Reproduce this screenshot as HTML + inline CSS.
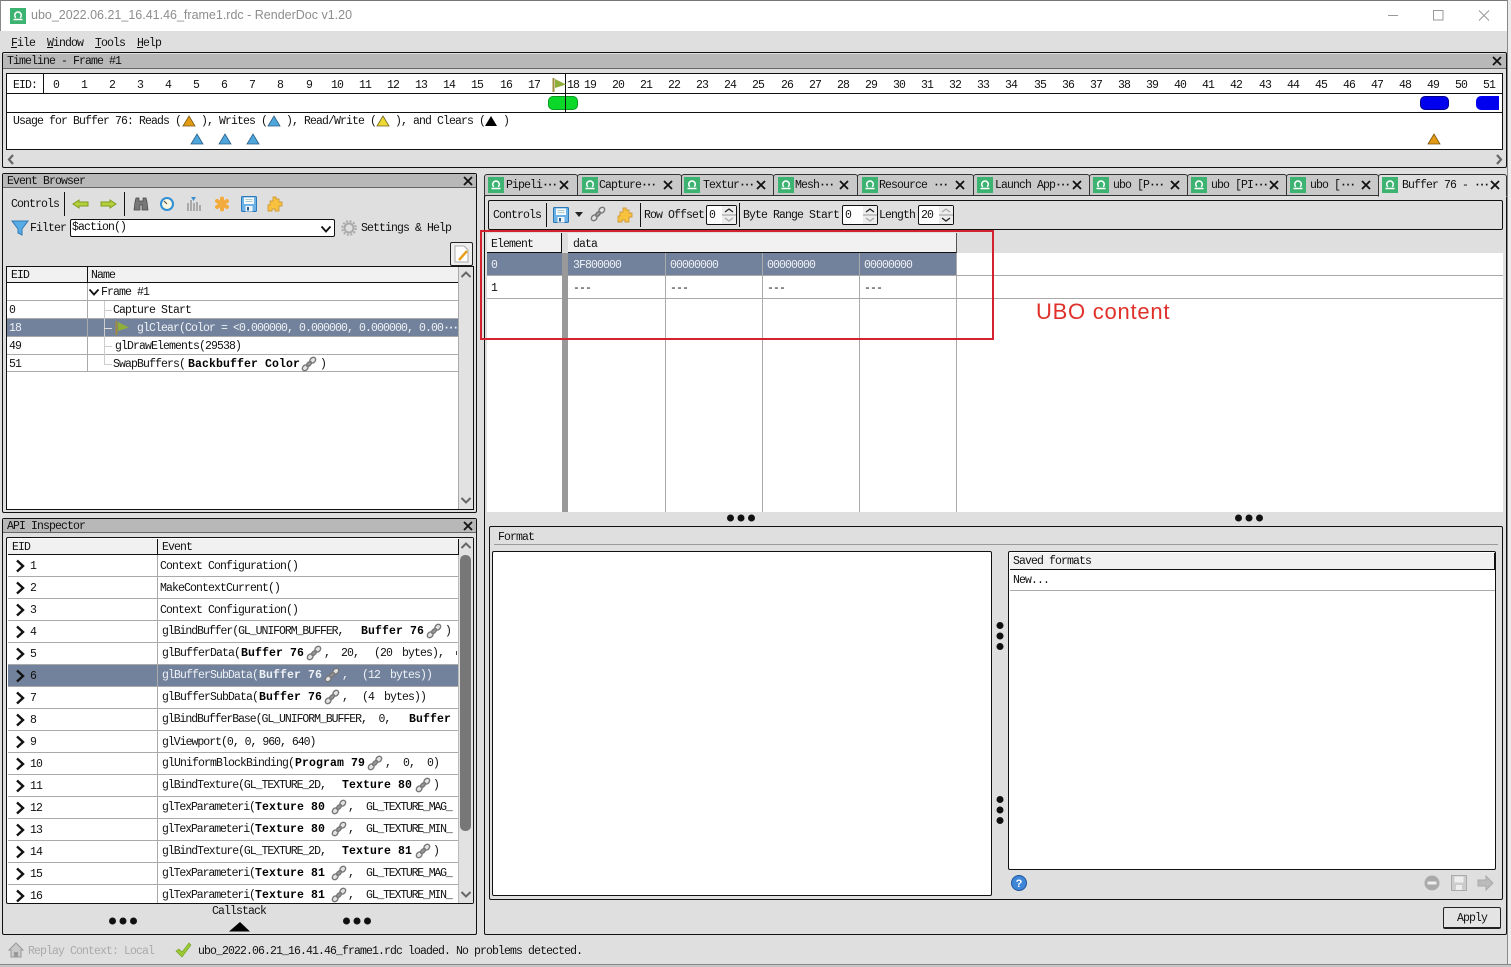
<!DOCTYPE html>
<html><head><meta charset="utf-8"><title>RenderDoc</title>
<style>
html,body{margin:0;padding:0;background:#dfdfdf;}
body{position:relative;width:1511px;height:967px;overflow:hidden;font-family:"Liberation Mono","Noto Sans CJK SC",monospace;font-size:11.5px;letter-spacing:-.9px;color:#111;}
div,span,svg{position:absolute;box-sizing:border-box;}
.t{white-space:pre;height:14px;line-height:14px;margin-top:1px;}
.b{font-weight:bold;letter-spacing:.1px;color:#000;}
.w{color:#eef1f5;}
.c{transform:translateX(-50%);}
.box{border:1px solid #111;}
.hd{background:#b8b8b8;}
.l{background:#aaa;}
.k{background:#111;}
.tab{top:174px;height:22px;background:#c9c9c9;border:1px solid #333;border-bottom:1px solid #333;border-radius:3px 3px 0 0;}
.e{letter-spacing:-2.3px;font-weight:bold;}
</style></head><body>
<svg width="0" height="0" style="left:0;top:0"><defs>
<symbol id="rd" viewBox="0 0 16 16"><rect width="16" height="16" fill="#3cb371"/><path d="M5.800 9.800a3.300 3.300 0 1 1 4.400 0" fill="none" stroke="#fff" stroke-width="1.500"/><path d="M3.500 11.500h9" stroke="#fff" stroke-width="1.500"/></symbol>
<symbol id="x" viewBox="0 0 10 10"><path d="M1 1l8 8M9 1l-8 8" stroke="#111" stroke-width="1.800"/></symbol>
<symbol id="ch" viewBox="0 0 16 16"><g fill="#e4e4e4" stroke="#777" stroke-width="1.400"><ellipse cx="11.800" cy="4.200" rx="3.200" ry="2.500" transform="rotate(-45 11.800 4.200)"/><ellipse cx="4.200" cy="11.800" rx="3.200" ry="2.500" transform="rotate(-45 4.200 11.800)"/><ellipse cx="8" cy="8" rx="3" ry="1.700" transform="rotate(-45 8 8)" fill="#999"/></g></symbol>
<symbol id="tb" viewBox="0 0 14 12"><path d="M7 1l6 10H1z" fill="#4ea6dc" stroke="#2b5f85" stroke-width=".8"/></symbol>
<symbol id="to" viewBox="0 0 14 12"><path d="M7 1l6 10H1z" fill="#e39b13" stroke="#7a5510" stroke-width=".8"/></symbol>
<symbol id="ty" viewBox="0 0 14 12"><path d="M7 1l6 10H1z" fill="#eed934" stroke="#6e6420" stroke-width=".8"/></symbol>
<symbol id="tk" viewBox="0 0 14 12"><path d="M7 1l6 10H1z" fill="#000"/></symbol>
<symbol id="ar" viewBox="0 0 10 14"><path d="M2 1.500L8 7l-6 5.500" fill="none" stroke="#111" stroke-width="2.400"/></symbol>
<symbol id="fl" viewBox="0 0 16 16"><rect x=".5" y=".5" width="15" height="15" rx="1" fill="#6db2e6" stroke="#2b78b8"/><rect x="3" y="1.500" width="10" height="6.500" fill="#f4f8fb"/><path d="M4.500 3.500h7M4.500 5.500h7" stroke="#9bb" stroke-width=".7"/><rect x="4.500" y="10" width="7" height="5.500" fill="#f0f4f7"/><rect x="6" y="11" width="2" height="3.500" fill="#2a5f8f"/></symbol>
<symbol id="pz" viewBox="0 0 16 16"><path d="M6 1h3v2h3v3h3v4h-3v5H8v-2H5v2H1v-6h2V5h3z" fill="#f8c23e" stroke="#cf9a3a" stroke-width=".9"/></symbol>
</defs></svg>

<!-- title bar -->
<div style="left:0;top:0;width:1507px;height:31px;background:#fff;border-top:1px solid #777;border-left:1px solid #888"></div>
<svg style="left:10px;top:8px" width="16" height="16"><use href="#rd"/></svg>
<div class="t" style="left:31px;top:8px;margin-top:0;font:12.500px/15px 'Liberation Sans',sans-serif;letter-spacing:0;color:#8d8d8d;height:15px">ubo_2022.06.21_16.41.46_frame1.rdc - RenderDoc v1.20</div>
<svg style="left:1385px;top:8px" width="115" height="16"><path d="M3 7.500h10" stroke="#999"/><rect x="48.500" y="2.500" width="9.500" height="9.500" fill="none" stroke="#999"/><path d="M94 2.500l10 10M104 2.500l-10 10" stroke="#999"/></svg>
<div style="left:1507px;top:0;width:4px;height:967px;background:#ececec;border-left:1px solid #888"></div>

<!-- menu -->
<div class="t" style="left:11px;top:36px;margin-top:0;top:36.500px"><u>F</u>ile</div>
<div class="t" style="left:47px;top:36.500px;margin-top:0"><u>W</u>indow</div>
<div class="t" style="left:95px;top:36.500px;margin-top:0"><u>T</u>ools</div>
<div class="t" style="left:137px;top:36.500px;margin-top:0"><u>H</u>elp</div>

<!-- timeline -->
<div class="box" style="left:2px;top:52px;width:1505px;height:116px;border-radius:2px"></div>
<div class="hd" style="left:3px;top:54px;width:1503px;height:15px;border-bottom:1px solid #666"></div>
<div class="t" style="left:7px;top:54px">Timeline - Frame #1</div>
<svg style="left:1492px;top:56px" width="10" height="10"><use href="#x"/></svg>
<div class="box" style="left:6px;top:73px;width:1497px;height:77px;background:#fff"></div>
<div class="k" style="left:7px;top:93px;width:1495px;height:1px"></div>
<div class="k" style="left:7px;top:112px;width:1495px;height:1px"></div>
<div class="k" style="left:43px;top:74px;width:1px;height:19px"></div>
<div class="t" style="left:13px;top:78px">EID:</div>
<div class="t c" style="left:56px;top:78px">0</div><div class="t c" style="left:84px;top:78px">1</div><div class="t c" style="left:112px;top:78px">2</div><div class="t c" style="left:140px;top:78px">3</div><div class="t c" style="left:168px;top:78px">4</div><div class="t c" style="left:196px;top:78px">5</div><div class="t c" style="left:224px;top:78px">6</div><div class="t c" style="left:252px;top:78px">7</div><div class="t c" style="left:280px;top:78px">8</div><div class="t c" style="left:309px;top:78px">9</div><div class="t c" style="left:337px;top:78px">10</div><div class="t c" style="left:365px;top:78px">11</div><div class="t c" style="left:393px;top:78px">12</div><div class="t c" style="left:421px;top:78px">13</div><div class="t c" style="left:449px;top:78px">14</div><div class="t c" style="left:477px;top:78px">15</div><div class="t c" style="left:506px;top:78px">16</div><div class="t c" style="left:534px;top:78px">17</div><div class="t c" style="left:573px;top:78px">18</div><div class="t c" style="left:590px;top:78px">19</div><div class="t c" style="left:618px;top:78px">20</div><div class="t c" style="left:646px;top:78px">21</div><div class="t c" style="left:674px;top:78px">22</div><div class="t c" style="left:702px;top:78px">23</div><div class="t c" style="left:730px;top:78px">24</div><div class="t c" style="left:758px;top:78px">25</div><div class="t c" style="left:787px;top:78px">26</div><div class="t c" style="left:815px;top:78px">27</div><div class="t c" style="left:843px;top:78px">28</div><div class="t c" style="left:871px;top:78px">29</div><div class="t c" style="left:899px;top:78px">30</div><div class="t c" style="left:927px;top:78px">31</div><div class="t c" style="left:955px;top:78px">32</div><div class="t c" style="left:983px;top:78px">33</div><div class="t c" style="left:1011px;top:78px">34</div><div class="t c" style="left:1040px;top:78px">35</div><div class="t c" style="left:1068px;top:78px">36</div><div class="t c" style="left:1096px;top:78px">37</div><div class="t c" style="left:1124px;top:78px">38</div><div class="t c" style="left:1152px;top:78px">39</div><div class="t c" style="left:1180px;top:78px">40</div><div class="t c" style="left:1208px;top:78px">41</div><div class="t c" style="left:1236px;top:78px">42</div><div class="t c" style="left:1265px;top:78px">43</div><div class="t c" style="left:1293px;top:78px">44</div><div class="t c" style="left:1321px;top:78px">45</div><div class="t c" style="left:1349px;top:78px">46</div><div class="t c" style="left:1377px;top:78px">47</div><div class="t c" style="left:1405px;top:78px">48</div><div class="t c" style="left:1433px;top:78px">49</div><div class="t c" style="left:1461px;top:78px">50</div><div class="t c" style="left:1489px;top:78px">51</div>
<div style="left:548px;top:96px;width:30px;height:14px;background:#0bd829;border:1px solid #0a9a20;border-radius:5px"></div>
<div class="k" style="left:565px;top:74px;width:1px;height:38px"></div>
<svg style="left:551px;top:77px" width="16" height="16"><path d="M2.500 1v14" stroke="#a08c3c" stroke-width="2"/><path d="M4 2l11 5.500L4 11z" fill="#8fae3a"/></svg>
<div style="left:1420px;top:96px;width:29px;height:14px;background:#0000ef;border:1px solid #00008a;border-radius:5px"></div>
<div style="left:1476px;top:96px;width:23px;height:14px;background:#0000ef;border-radius:5px 0 0 5px"></div>
<div class="t" style="left:13px;top:114px">Usage for Buffer 76: Reads (</div>
<svg style="left:182px;top:115px" width="14" height="12"><use href="#to"/></svg>
<div class="t" style="left:201px;top:114px">), Writes (</div>
<svg style="left:267px;top:115px" width="14" height="12"><use href="#tb"/></svg>
<div class="t" style="left:286px;top:114px">), Read/Write (</div>
<svg style="left:376px;top:115px" width="14" height="12"><use href="#ty"/></svg>
<div class="t" style="left:395px;top:114px">), and Clears (</div>
<svg style="left:484px;top:115px" width="14" height="12"><use href="#tk"/></svg>
<div class="t" style="left:503px;top:114px">)</div>
<svg style="left:190px;top:133px" width="14" height="12"><use href="#tb"/></svg>
<svg style="left:218px;top:133px" width="14" height="12"><use href="#tb"/></svg>
<svg style="left:246px;top:133px" width="14" height="12"><use href="#tb"/></svg>
<svg style="left:1427px;top:133px" width="14" height="12"><use href="#to"/></svg>
<svg style="left:6px;top:154px" width="10" height="11"><path d="M7 1L3 5.500 7 10" fill="none" stroke="#666" stroke-width="2.200"/></svg>
<svg style="left:1494px;top:154px" width="10" height="11"><path d="M3 1l4 4.500L3 10" fill="none" stroke="#666" stroke-width="2.200"/></svg>

<!-- event browser -->
<div class="box" style="left:2px;top:173px;width:475px;height:340px;border-radius:2px"></div>
<div class="hd" style="left:3px;top:174px;width:473px;height:14px;border-bottom:1px solid #666"></div>
<div class="t" style="left:7px;top:174px">Event Browser</div>
<svg style="left:463px;top:176px" width="10" height="10"><use href="#x"/></svg>
<div class="t" style="left:11px;top:197px">Controls</div>
<div class="k" style="left:64px;top:192px;width:1px;height:24px"></div>
<svg style="left:72px;top:197px" width="18" height="14"><path d="M7 3L1 7l6 4V9h9V5H7z" fill="#b4d03a" stroke="#7f9c20"/></svg>
<svg style="left:99px;top:197px" width="18" height="14"><path d="M11 3l6 4-6 4V9H2V5h9z" fill="#b4d03a" stroke="#7f9c20"/></svg>
<div class="k" style="left:124px;top:192px;width:1px;height:24px"></div>
<svg style="left:133px;top:196px" width="16" height="16"><path d="M2 6l1-4h3v3h4V2h3l1 4 1 8H9V9H7v5H1z" fill="#777" stroke="#444" stroke-width=".7"/></svg>
<svg style="left:159px;top:196px" width="16" height="16"><circle cx="8" cy="8" r="7" fill="#2f8fd6"/><circle cx="8" cy="8" r="5" fill="#fbf6df"/><path d="M5 5l3 3" stroke="#444"/></svg>
<svg style="left:186px;top:196px" width="17" height="16"><path d="M2 7v8M5 4v11M8 7v8M11 6v9M14 9v6" stroke="#aaa" stroke-width="2"/><path d="M5 1h5L7.500 5z" fill="#3f8fd0"/></svg>
<svg style="left:214px;top:196px" width="16" height="16"><path d="M8 2.500v11M3 5l10 6M13 5L3 11" stroke="#f4ab3e" stroke-width="4" stroke-linecap="round"/></svg>
<svg style="left:241px;top:196px" width="16" height="16"><use href="#fl"/></svg>
<svg style="left:267px;top:196px" width="16" height="16"><use href="#pz"/></svg>
<svg style="left:11px;top:219px" width="18" height="18"><path d="M1 2h16l-6 8v6l-4-2v-4z" fill="#58ace6" stroke="#2f78b0"/></svg>
<div class="t" style="left:30px;top:221px">Filter</div>
<div class="box" style="left:70px;top:219px;width:265px;height:18px;background:#fff;border-radius:2px"></div>
<div class="t" style="left:72px;top:220px">$action()</div>
<svg style="left:320px;top:225px" width="12" height="9"><path d="M1.500 1.500L6 6.500l4.500-5" fill="none" stroke="#111" stroke-width="1.800"/></svg>
<svg style="left:341px;top:220px" width="16" height="16"><circle cx="8" cy="8" r="4.500" fill="none" stroke="#aaa" stroke-width="2"/><circle cx="8" cy="8" r="6.800" fill="none" stroke="#aaa" stroke-width="2" stroke-dasharray="2 1.600"/></svg>
<div class="t" style="left:361px;top:221px">Settings &amp; Help</div>
<div style="left:450px;top:242px;width:23px;height:24px;background:#eee;border:1px solid #222;border-radius:2px"></div>
<svg style="left:454px;top:245px" width="16" height="18"><path d="M1 1h9l4 4v12H1z" fill="#fff" stroke="#aaa"/><path d="M5 15l8-9" stroke="#e8a020" stroke-width="2.500"/></svg>
<div class="box" style="left:6px;top:266px;width:468px;height:244px;background:#fff"></div>
<div style="left:459px;top:267px;width:14px;height:242px;background:#e2e2e2"></div>
<div style="left:7px;top:267px;width:451px;height:16px;background:#f1f1f1;border-bottom:1px solid #111"></div>
<div class="k" style="left:87px;top:267px;width:1px;height:16px"></div>
<div class="t" style="left:11px;top:268px">EID</div>
<div class="t" style="left:91px;top:268px">Name</div>
<div style="left:7px;top:283px;width:452px;height:89px;border-bottom:1px solid #aaa"></div>
<div class="l" style="left:7px;top:300px;width:452px;height:1px"></div>
<div class="l" style="left:7px;top:318px;width:452px;height:1px"></div>
<div class="l" style="left:7px;top:336px;width:452px;height:1px"></div>
<div class="l" style="left:7px;top:354px;width:452px;height:1px"></div>
<div class="l" style="left:87px;top:283px;width:1px;height:89px"></div>
<div class="l" style="left:458px;top:267px;width:1px;height:242px"></div>
<div style="left:7px;top:319px;width:451px;height:17px;background:#72829c"></div>
<div class="l" style="left:87px;top:319px;width:1px;height:17px"></div>
<div class="l" style="left:104px;top:301px;width:1px;height:63px;background:#ccc"></div>
<div style="left:104px;top:310px;width:8px;height:1px;background:#ccc"></div>
<div style="left:104px;top:328px;width:8px;height:1px;background:#ddd"></div>
<div style="left:104px;top:346px;width:8px;height:1px;background:#ccc"></div>
<div style="left:104px;top:364px;width:8px;height:1px;background:#ccc"></div>
<svg style="left:88px;top:288px" width="12" height="9"><path d="M1.500 1.500L6 6.500l4.500-5" fill="none" stroke="#111" stroke-width="1.800"/></svg>
<div class="t" style="left:101px;top:285px">Frame #1</div>
<div class="t" style="left:9px;top:303px">0</div>
<div class="t" style="left:113px;top:303px">Capture Start</div>
<div class="t w" style="left:9px;top:321px">18</div>
<svg style="left:114px;top:320px" width="16" height="16"><path d="M2.500 1v14" stroke="#a08c3c" stroke-width="2"/><path d="M4 2l11 5.500L4 11z" fill="#8fae3a"/></svg>
<div class="t w" style="left:137px;top:321px">glClear(Color = &lt;0.000000, 0.000000, 0.000000, 0.00<span class="e" style="position:static">···</span></div>
<div class="t" style="left:9px;top:339px">49</div>
<div class="t" style="left:115px;top:339px">glDrawElements(29538)</div>
<div class="t" style="left:9px;top:357px">51</div>
<div class="t" style="left:113px;top:357px">SwapBuffers(</div>
<div class="t b" style="left:188px;top:357px">Backbuffer Color</div>
<svg style="left:301px;top:356px" width="16" height="16"><use href="#ch"/></svg>
<div class="t" style="left:320px;top:357px">)</div>
<svg style="left:460px;top:270px" width="12" height="9"><path d="M1.500 7L6 2.500 10.500 7" fill="none" stroke="#666" stroke-width="2"/></svg>
<svg style="left:460px;top:496px" width="12" height="9"><path d="M1.500 2L6 6.500 10.500 2" fill="none" stroke="#666" stroke-width="2"/></svg>

<!-- API inspector -->
<div class="box" style="left:2px;top:518px;width:475px;height:417px;border-radius:2px"></div>
<div class="hd" style="left:3px;top:519px;width:473px;height:14px;border-bottom:1px solid #666"></div>
<div class="t" style="left:7px;top:519px">API Inspector</div>
<svg style="left:463px;top:521px" width="10" height="10"><use href="#x"/></svg>
<div class="box" style="left:6px;top:537px;width:468px;height:367px;background:#fff;border-radius:2px"></div>
<div style="left:459px;top:538px;width:14px;height:365px;background:#e2e2e2"></div>
<div style="left:8px;top:539px;width:450px;height:16px;background:#f1f1f1;border-bottom:1px solid #111"></div>
<div class="k" style="left:157px;top:539px;width:1px;height:16px"></div>
<div class="t" style="left:12px;top:540px">EID</div>
<div class="t" style="left:162px;top:540px">Event</div>
<div class="l" style="left:8px;top:576px;width:450px;height:1px"></div><div class="l" style="left:8px;top:598px;width:450px;height:1px"></div><div class="l" style="left:8px;top:620px;width:450px;height:1px"></div><div class="l" style="left:8px;top:642px;width:450px;height:1px"></div><div class="l" style="left:8px;top:664px;width:450px;height:1px"></div><div class="l" style="left:8px;top:686px;width:450px;height:1px"></div><div class="l" style="left:8px;top:708px;width:450px;height:1px"></div><div class="l" style="left:8px;top:730px;width:450px;height:1px"></div><div class="l" style="left:8px;top:752px;width:450px;height:1px"></div><div class="l" style="left:8px;top:774px;width:450px;height:1px"></div><div class="l" style="left:8px;top:796px;width:450px;height:1px"></div><div class="l" style="left:8px;top:818px;width:450px;height:1px"></div><div class="l" style="left:8px;top:840px;width:450px;height:1px"></div><div class="l" style="left:8px;top:862px;width:450px;height:1px"></div><div class="l" style="left:8px;top:884px;width:450px;height:1px"></div>
<div style="left:8px;top:665px;width:450px;height:21px;background:#72829c"></div>
<div class="l" style="left:157px;top:555px;width:1px;height:348px"></div>
<div class="k" style="left:458px;top:539px;width:1px;height:16px"></div>
<div style="left:458px;top:555px;width:1px;height:348px;background:#bbb"></div>
<div style="left:460px;top:555px;width:11px;height:276px;background:#777;border-radius:5px"></div>
<svg style="left:460px;top:541px" width="12" height="9"><path d="M1.500 7L6 2.500 10.500 7" fill="none" stroke="#666" stroke-width="2"/></svg>
<svg style="left:460px;top:890px" width="12" height="9"><path d="M1.500 2L6 6.500 10.500 2" fill="none" stroke="#666" stroke-width="2"/></svg>

<svg style="left:15px;top:559px" width="10" height="14"><use href="#ar"/></svg><div class="t" style="left:30px;top:559px">1</div><div class="t" style="left:160px;top:559px">Context Configuration()</div>
<svg style="left:15px;top:581px" width="10" height="14"><use href="#ar"/></svg><div class="t" style="left:30px;top:581px">2</div><div class="t" style="left:160px;top:581px">MakeContextCurrent()</div>
<svg style="left:15px;top:603px" width="10" height="14"><use href="#ar"/></svg><div class="t" style="left:30px;top:603px">3</div><div class="t" style="left:160px;top:603px">Context Configuration()</div>
<svg style="left:15px;top:625px" width="10" height="14"><use href="#ar"/></svg><div class="t" style="left:30px;top:625px">4</div><div class="t" style="left:162px;top:624px;letter-spacing:-1.050px">glBindBuffer(GL_UNIFORM_BUFFER,</div><div class="t b" style="left:361px;top:624px">Buffer 76</div><svg style="left:426px;top:623px" width="16" height="16"><use href="#ch"/></svg><div class="t" style="left:445px;top:624px">)</div>
<svg style="left:15px;top:647px" width="10" height="14"><use href="#ar"/></svg><div class="t" style="left:30px;top:647px">5</div><div class="t" style="left:162px;top:646px">glBufferData(</div><div class="t b" style="left:241px;top:646px">Buffer 76</div><svg style="left:306px;top:645px" width="16" height="16"><use href="#ch"/></svg><div class="t" style="left:324px;top:646px">,</div><div class="t" style="left:341px;top:646px">20,</div><div class="t" style="left:374px;top:646px">(20</div><div class="t" style="left:402px;top:646px">bytes),</div><div style="left:456px;top:651px;width:1px;height:4px;background:#444"></div>
<svg style="left:15px;top:669px" width="10" height="14"><use href="#ar"/></svg><div class="t" style="left:30px;top:669px">6</div><div class="t w" style="left:162px;top:668px">glBufferSubData(</div><div class="t b w" style="left:259px;top:668px">Buffer 76</div><svg style="left:324px;top:667px" width="16" height="16"><use href="#ch"/></svg><div class="t w" style="left:342px;top:668px">,</div><div class="t w" style="left:362px;top:668px">(12</div><div class="t w" style="left:390px;top:668px">bytes))</div>
<svg style="left:15px;top:691px" width="10" height="14"><use href="#ar"/></svg><div class="t" style="left:30px;top:691px">7</div><div class="t" style="left:162px;top:690px">glBufferSubData(</div><div class="t b" style="left:259px;top:690px">Buffer 76</div><svg style="left:324px;top:689px" width="16" height="16"><use href="#ch"/></svg><div class="t" style="left:342px;top:690px">,</div><div class="t" style="left:362px;top:690px">(4</div><div class="t" style="left:384px;top:690px">bytes))</div>
<svg style="left:15px;top:713px" width="10" height="14"><use href="#ar"/></svg><div class="t" style="left:30px;top:713px">8</div><div class="t" style="left:162px;top:712px;letter-spacing:-1.050px">glBindBufferBase(GL_UNIFORM_BUFFER,  0,</div><div class="t b" style="left:409px;top:712px">Buffer</div>
<svg style="left:15px;top:735px" width="10" height="14"><use href="#ar"/></svg><div class="t" style="left:30px;top:735px">9</div><div class="t" style="left:162px;top:735px;letter-spacing:-1px">glViewport(0, 0, 960, 640)</div>
<svg style="left:15px;top:757px" width="10" height="14"><use href="#ar"/></svg><div class="t" style="left:30px;top:757px">10</div><div class="t" style="left:162px;top:756px">glUniformBlockBinding(</div><div class="t b" style="left:295px;top:756px">Program 79</div><svg style="left:367px;top:755px" width="16" height="16"><use href="#ch"/></svg><div class="t" style="left:385px;top:756px">,</div><div class="t" style="left:403px;top:756px">0,</div><div class="t" style="left:427px;top:756px">0)</div>
<svg style="left:15px;top:779px" width="10" height="14"><use href="#ar"/></svg><div class="t" style="left:30px;top:779px">11</div><div class="t" style="left:162px;top:778px;letter-spacing:-1.050px">glBindTexture(GL_TEXTURE_2D,</div><div class="t b" style="left:342px;top:778px">Texture 80</div><svg style="left:415px;top:777px" width="16" height="16"><use href="#ch"/></svg><div class="t" style="left:433px;top:778px">)</div>
<svg style="left:15px;top:801px" width="10" height="14"><use href="#ar"/></svg><div class="t" style="left:30px;top:801px">12</div><div class="t" style="left:162px;top:800px;letter-spacing:-1.100px">glTexParameteri(</div><div class="t b" style="left:255px;top:800px">Texture 80</div><svg style="left:331px;top:799px" width="16" height="16"><use href="#ch"/></svg><div class="t" style="left:348px;top:800px">,</div><div class="t" style="left:366px;top:800px;letter-spacing:-1.200px">GL_TEXTURE_MAG_</div>
<svg style="left:15px;top:823px" width="10" height="14"><use href="#ar"/></svg><div class="t" style="left:30px;top:823px">13</div><div class="t" style="left:162px;top:822px;letter-spacing:-1.100px">glTexParameteri(</div><div class="t b" style="left:255px;top:822px">Texture 80</div><svg style="left:331px;top:821px" width="16" height="16"><use href="#ch"/></svg><div class="t" style="left:348px;top:822px">,</div><div class="t" style="left:366px;top:822px;letter-spacing:-1.200px">GL_TEXTURE_MIN_</div>
<svg style="left:15px;top:845px" width="10" height="14"><use href="#ar"/></svg><div class="t" style="left:30px;top:845px">14</div><div class="t" style="left:162px;top:844px;letter-spacing:-1.050px">glBindTexture(GL_TEXTURE_2D,</div><div class="t b" style="left:342px;top:844px">Texture 81</div><svg style="left:415px;top:843px" width="16" height="16"><use href="#ch"/></svg><div class="t" style="left:433px;top:844px">)</div>
<svg style="left:15px;top:867px" width="10" height="14"><use href="#ar"/></svg><div class="t" style="left:30px;top:867px">15</div><div class="t" style="left:162px;top:866px;letter-spacing:-1.100px">glTexParameteri(</div><div class="t b" style="left:255px;top:866px">Texture 81</div><svg style="left:331px;top:865px" width="16" height="16"><use href="#ch"/></svg><div class="t" style="left:348px;top:866px">,</div><div class="t" style="left:366px;top:866px;letter-spacing:-1.200px">GL_TEXTURE_MAG_</div>
<svg style="left:15px;top:889px" width="10" height="14"><use href="#ar"/></svg><div class="t" style="left:30px;top:889px">16</div><div class="t" style="left:162px;top:888px;letter-spacing:-1.100px">glTexParameteri(</div><div class="t b" style="left:255px;top:888px">Texture 81</div><svg style="left:331px;top:887px" width="16" height="16"><use href="#ch"/></svg><div class="t" style="left:348px;top:888px">,</div><div class="t" style="left:366px;top:888px;letter-spacing:-1.200px">GL_TEXTURE_MIN_</div>

<svg style="left:108px;top:917px" width="30" height="8"><circle cx="4.500" cy="4" r="3.500" fill="#111"/><circle cx="15" cy="4" r="3.500" fill="#111"/><circle cx="25.500" cy="4" r="3.500" fill="#111"/></svg>
<svg style="left:342px;top:917px" width="30" height="8"><circle cx="4.500" cy="4" r="3.500" fill="#111"/><circle cx="15" cy="4" r="3.500" fill="#111"/><circle cx="25.500" cy="4" r="3.500" fill="#111"/></svg>
<div class="t" style="left:212px;top:904px">Callstack</div>
<svg style="left:229px;top:922px" width="22" height="10"><path d="M11 0l10 9.500H0z" fill="#000"/></svg>

<!-- right tabs -->
<div class="box" style="left:484px;top:195px;width:1023px;height:740px;border-radius:2px"></div>
<div class="tab" style="left:484px;width:94px"></div>
<div class="tab" style="left:577px;width:105px"></div>
<div class="tab" style="left:681px;width:93px"></div>
<div class="tab" style="left:773px;width:85px"></div>
<div class="tab" style="left:857px;width:117px"></div>
<div class="tab" style="left:973px;width:117px"></div>
<div class="tab" style="left:1089px;width:99px"></div>
<div class="tab" style="left:1187px;width:100px"></div>
<div class="tab" style="left:1286px;width:93px"></div>
<div class="tab" style="left:1378px;width:129px;background:#dfdfdf;border-bottom:1px solid #dfdfdf;height:23px"></div>
<svg style="left:488px;top:177px" width="16" height="16"><use href="#rd"/></svg><div class="t" style="left:506px;top:178px">Pipeli<span class="e" style="position:static">···</span></div><svg style="left:559px;top:180px" width="10" height="10"><use href="#x"/></svg>
<svg style="left:582px;top:177px" width="16" height="16"><use href="#rd"/></svg><div class="t" style="left:599px;top:178px">Capture<span class="e" style="position:static">···</span></div><svg style="left:663px;top:180px" width="10" height="10"><use href="#x"/></svg>
<svg style="left:684px;top:177px" width="16" height="16"><use href="#rd"/></svg><div class="t" style="left:703px;top:178px">Textur<span class="e" style="position:static">···</span></div><svg style="left:756px;top:180px" width="10" height="10"><use href="#x"/></svg>
<svg style="left:778px;top:177px" width="16" height="16"><use href="#rd"/></svg><div class="t" style="left:795px;top:178px">Mesh<span class="e" style="position:static">···</span></div><svg style="left:839px;top:180px" width="10" height="10"><use href="#x"/></svg>
<svg style="left:862px;top:177px" width="16" height="16"><use href="#rd"/></svg><div class="t" style="left:879px;top:178px">Resource <span class="e" style="position:static">···</span></div><svg style="left:955px;top:180px" width="10" height="10"><use href="#x"/></svg>
<svg style="left:977px;top:177px" width="16" height="16"><use href="#rd"/></svg><div class="t" style="left:995px;top:178px">Launch App<span class="e" style="position:static">···</span></div><svg style="left:1072px;top:180px" width="10" height="10"><use href="#x"/></svg>
<svg style="left:1093px;top:177px" width="16" height="16"><use href="#rd"/></svg><div class="t" style="left:1113px;top:178px">ubo [P<span class="e" style="position:static">···</span></div><svg style="left:1170px;top:180px" width="10" height="10"><use href="#x"/></svg>
<svg style="left:1191px;top:177px" width="16" height="16"><use href="#rd"/></svg><div class="t" style="left:1211px;top:178px">ubo [PI<span class="e" style="position:static">···</span></div><svg style="left:1269px;top:180px" width="10" height="10"><use href="#x"/></svg>
<svg style="left:1290px;top:177px" width="16" height="16"><use href="#rd"/></svg><div class="t" style="left:1310px;top:178px">ubo [<span class="e" style="position:static">···</span></div><svg style="left:1361px;top:180px" width="10" height="10"><use href="#x"/></svg>
<svg style="left:1382px;top:177px" width="16" height="16"><use href="#rd"/></svg><div class="t" style="left:1402px;top:178px">Buffer 76 - <span class="e" style="position:static">···</span></div><svg style="left:1490px;top:180px" width="10" height="10"><use href="#x"/></svg>

<!-- buffer toolbar -->
<div class="box" style="left:488px;top:200px;width:1015px;height:30px;border-radius:2px"></div>
<div class="t" style="left:493px;top:208px">Controls</div>
<div class="k" style="left:546px;top:203px;width:1px;height:24px"></div>
<svg style="left:553px;top:207px" width="16" height="16"><use href="#fl"/></svg>
<svg style="left:575px;top:212px" width="8" height="5"><path d="M0 0h8L4 5z" fill="#222"/></svg>
<svg style="left:590px;top:206px" width="16" height="16"><use href="#ch"/></svg>
<svg style="left:617px;top:207px" width="16" height="16"><use href="#pz"/></svg>
<div class="k" style="left:640px;top:203px;width:1px;height:24px"></div>
<div class="t" style="left:644px;top:208px">Row Offset</div>
<div class="box" style="left:706px;top:205px;width:31px;height:20px;background:#fff;border-radius:2px"></div>
<div class="t" style="left:709px;top:208px">0</div>
<div class="k" style="left:739px;top:203px;width:1px;height:24px"></div>
<div class="t" style="left:743px;top:208px">Byte Range Start</div>
<div class="box" style="left:842px;top:205px;width:36px;height:20px;background:#fff;border-radius:2px"></div>
<div class="t" style="left:845px;top:208px">0</div>
<div class="t" style="left:879px;top:208px">Length</div>
<div class="box" style="left:918px;top:205px;width:36px;height:20px;background:#fff;border-radius:2px"></div>
<div class="t" style="left:921px;top:208px">20</div>
<svg style="left:722px;top:206px" width="14" height="18"><rect width="14" height="18" fill="#ededed"/><path d="M0 9h14" stroke="#999"/><path d="M3 6l4-3 4 3" fill="none" stroke="#222" stroke-width="1.300"/><path d="M3 12l4 3 4-3" fill="none" stroke="#aaa" stroke-width="1.300"/></svg>
<svg style="left:863px;top:206px" width="14" height="18"><rect width="14" height="18" fill="#ededed"/><path d="M0 9h14" stroke="#999"/><path d="M3 6l4-3 4 3" fill="none" stroke="#222" stroke-width="1.300"/><path d="M3 12l4 3 4-3" fill="none" stroke="#aaa" stroke-width="1.300"/></svg>
<svg style="left:939px;top:206px" width="14" height="18"><rect width="14" height="18" fill="#ededed"/><path d="M0 9h14" stroke="#999"/><path d="M3 6l4-3 4 3" fill="none" stroke="#aaa" stroke-width="1.300"/><path d="M3 12l4 3 4-3" fill="none" stroke="#222" stroke-width="1.300"/></svg>

<!-- buffer table -->
<div style="left:487px;top:253px;width:1016px;height:259px;background:#fff"></div>
<div style="left:487px;top:233px;width:75px;height:20px;background:#f1f1f1;border-bottom:1px solid #111;border-right:1px solid #111"></div>
<div style="left:568px;top:233px;width:389px;height:20px;background:#f1f1f1;border-bottom:1px solid #111;border-right:1px solid #555"></div>
<div class="t" style="left:491px;top:237px">Element</div>
<div class="t" style="left:573px;top:237px">data</div>
<div style="left:487px;top:253px;width:470px;height:22px;background:#72829c"></div>
<div class="l" style="left:487px;top:275px;width:1016px;height:1px"></div>
<div class="l" style="left:487px;top:298px;width:1016px;height:1px"></div>
<div class="l" style="left:665px;top:253px;width:1px;height:259px"></div>
<div class="l" style="left:762px;top:253px;width:1px;height:259px"></div>
<div class="l" style="left:859px;top:253px;width:1px;height:259px"></div>
<div class="l" style="left:956px;top:253px;width:1px;height:259px"></div>
<div style="left:562px;top:253px;width:6px;height:259px;background:#999"></div>
<div class="t w" style="left:491px;top:258px">0</div><div class="t w" style="left:573px;top:258px">3F800000</div><div class="t w" style="left:670px;top:258px">00000000</div><div class="t w" style="left:767px;top:258px">00000000</div><div class="t w" style="left:864px;top:258px">00000000</div>
<div class="t" style="left:491px;top:281px">1</div><div class="t" style="left:573px;top:281px">---</div><div class="t" style="left:670px;top:281px">---</div><div class="t" style="left:767px;top:281px">---</div><div class="t" style="left:864px;top:281px">---</div>
<div style="left:480px;top:230px;width:514px;height:110px;border:2px solid #d3232f"></div>
<div class="t" style="left:1036px;top:298px;margin-top:0;height:28px;font:22px/28px 'Liberation Sans','Noto Sans CJK SC',sans-serif;letter-spacing:.75px;color:#e0302a">UBO content</div>

<svg style="left:726px;top:514px" width="30" height="8"><circle cx="4.500" cy="4" r="3.500" fill="#111"/><circle cx="15" cy="4" r="3.500" fill="#111"/><circle cx="25.500" cy="4" r="3.500" fill="#111"/></svg>
<svg style="left:1234px;top:514px" width="30" height="8"><circle cx="4.500" cy="4" r="3.500" fill="#111"/><circle cx="15" cy="4" r="3.500" fill="#111"/><circle cx="25.500" cy="4" r="3.500" fill="#111"/></svg>

<!-- format -->
<div class="box" style="left:489px;top:526px;width:1014px;height:374px;border-radius:2px"></div>
<div style="left:494px;top:544px;width:1004px;height:1px;background:#999"></div>
<div class="t" style="left:498px;top:530px">Format</div>
<div class="box" style="left:492px;top:551px;width:500px;height:345px;background:#fff;border-radius:2px"></div>
<svg style="left:996px;top:621px" width="8" height="30"><circle cx="4" cy="4.500" r="3.500" fill="#111"/><circle cx="4" cy="15" r="3.500" fill="#111"/><circle cx="4" cy="25.500" r="3.500" fill="#111"/></svg>
<svg style="left:996px;top:795px" width="8" height="30"><circle cx="4" cy="4.500" r="3.500" fill="#111"/><circle cx="4" cy="15" r="3.500" fill="#111"/><circle cx="4" cy="25.500" r="3.500" fill="#111"/></svg>
<div class="box" style="left:1008px;top:551px;width:488px;height:319px;background:#fff;border-radius:2px"></div>
<div style="left:1010px;top:553px;width:485px;height:17px;background:#f1f1f1;border-bottom:1px solid #111;border-right:1px solid #111"></div>
<div class="t" style="left:1013px;top:554px">Saved formats</div>
<div class="t" style="left:1013px;top:573px">New...</div>
<div class="l" style="left:1010px;top:590px;width:485px;height:1px"></div>
<svg style="left:1011px;top:875px" width="16" height="16"><circle cx="8" cy="8" r="7.500" fill="#3f86d8" stroke="#22569a"/><text x="8" y="12" text-anchor="middle" font-family="Liberation Sans" font-size="11" font-weight="bold" fill="#fff" style="letter-spacing:0">?</text></svg>
<svg style="left:1424px;top:875px" width="16" height="16"><circle cx="8" cy="8" r="7.500" fill="#aaa"/><rect x="3.500" y="6.500" width="9" height="3" fill="#eee"/></svg>
<svg style="left:1451px;top:875px" width="16" height="16"><rect x=".5" y=".5" width="15" height="15" fill="#ccc" stroke="#aaa"/><rect x="3.500" y="1.500" width="9" height="6" fill="#eee"/><rect x="5" y="10" width="6" height="5" fill="#eee"/></svg>
<svg style="left:1477px;top:875px" width="17" height="16"><path d="M1 5h8V1l7 7-7 7v-4H1z" fill="#bbb" stroke="#aaa"/></svg>
<div style="left:1443px;top:907px;width:58px;height:22px;background:#e4e4e4;border:1px solid #222;border-bottom-width:2px;border-radius:2px"></div>
<div class="t" style="left:1457px;top:911px">Apply</div>

<!-- status -->
<svg style="left:8px;top:942px" width="16" height="16"><path d="M8 1L1 8h2v7h10V8h2z" fill="#c9c9c9" stroke="#999"/><rect x="6" y="10" width="4" height="5" fill="#999"/></svg>
<div class="t" style="left:28px;top:944px;color:#aaa">Replay Context: Local</div>
<svg style="left:175px;top:942px" width="17" height="16"><path d="M1 9l3-2 3 3 7-9 2 2-9 12z" fill="#9acb32" stroke="#6f9a22" stroke-width=".6"/></svg>
<div class="t" style="left:198px;top:944px">ubo_2022.06.21_16.41.46_frame1.rdc loaded. No problems detected.</div>

<!-- bottom strip -->
<div style="left:0;top:964px;width:1511px;height:3px;background:#c6c6c6;border-top:1px solid #888;overflow:hidden"></div>
<div style="left:0;top:965px;width:760px;height:2px;overflow:hidden">
<span class="t" style="left:13px;top:-12px;font-size:10px;color:#444">ubo</span>
<span class="t" style="left:52px;top:-12px;font-size:10px;color:#444">Python Packages</span>
<span class="t" style="left:143px;top:-12px;font-size:10px;color:#444">TODO</span>
<span class="t" style="left:190px;top:-12px;font-size:10px;color:#444">CMake</span>
<span class="t" style="left:243px;top:-12px;font-size:10px;color:#444">Click Back</span>
<span class="t" style="left:305px;top:-12px;font-size:10px;color:#444">Problems</span>
<span class="t" style="left:366px;top:-12px;font-size:10px;color:#444">Terminal</span>
<span class="t" style="left:422px;top:-12px;font-size:10px;color:#444">Messages</span>
<span class="t" style="left:483px;top:-12px;font-size:10px;color:#444">Services</span>
</div>
</body></html>
